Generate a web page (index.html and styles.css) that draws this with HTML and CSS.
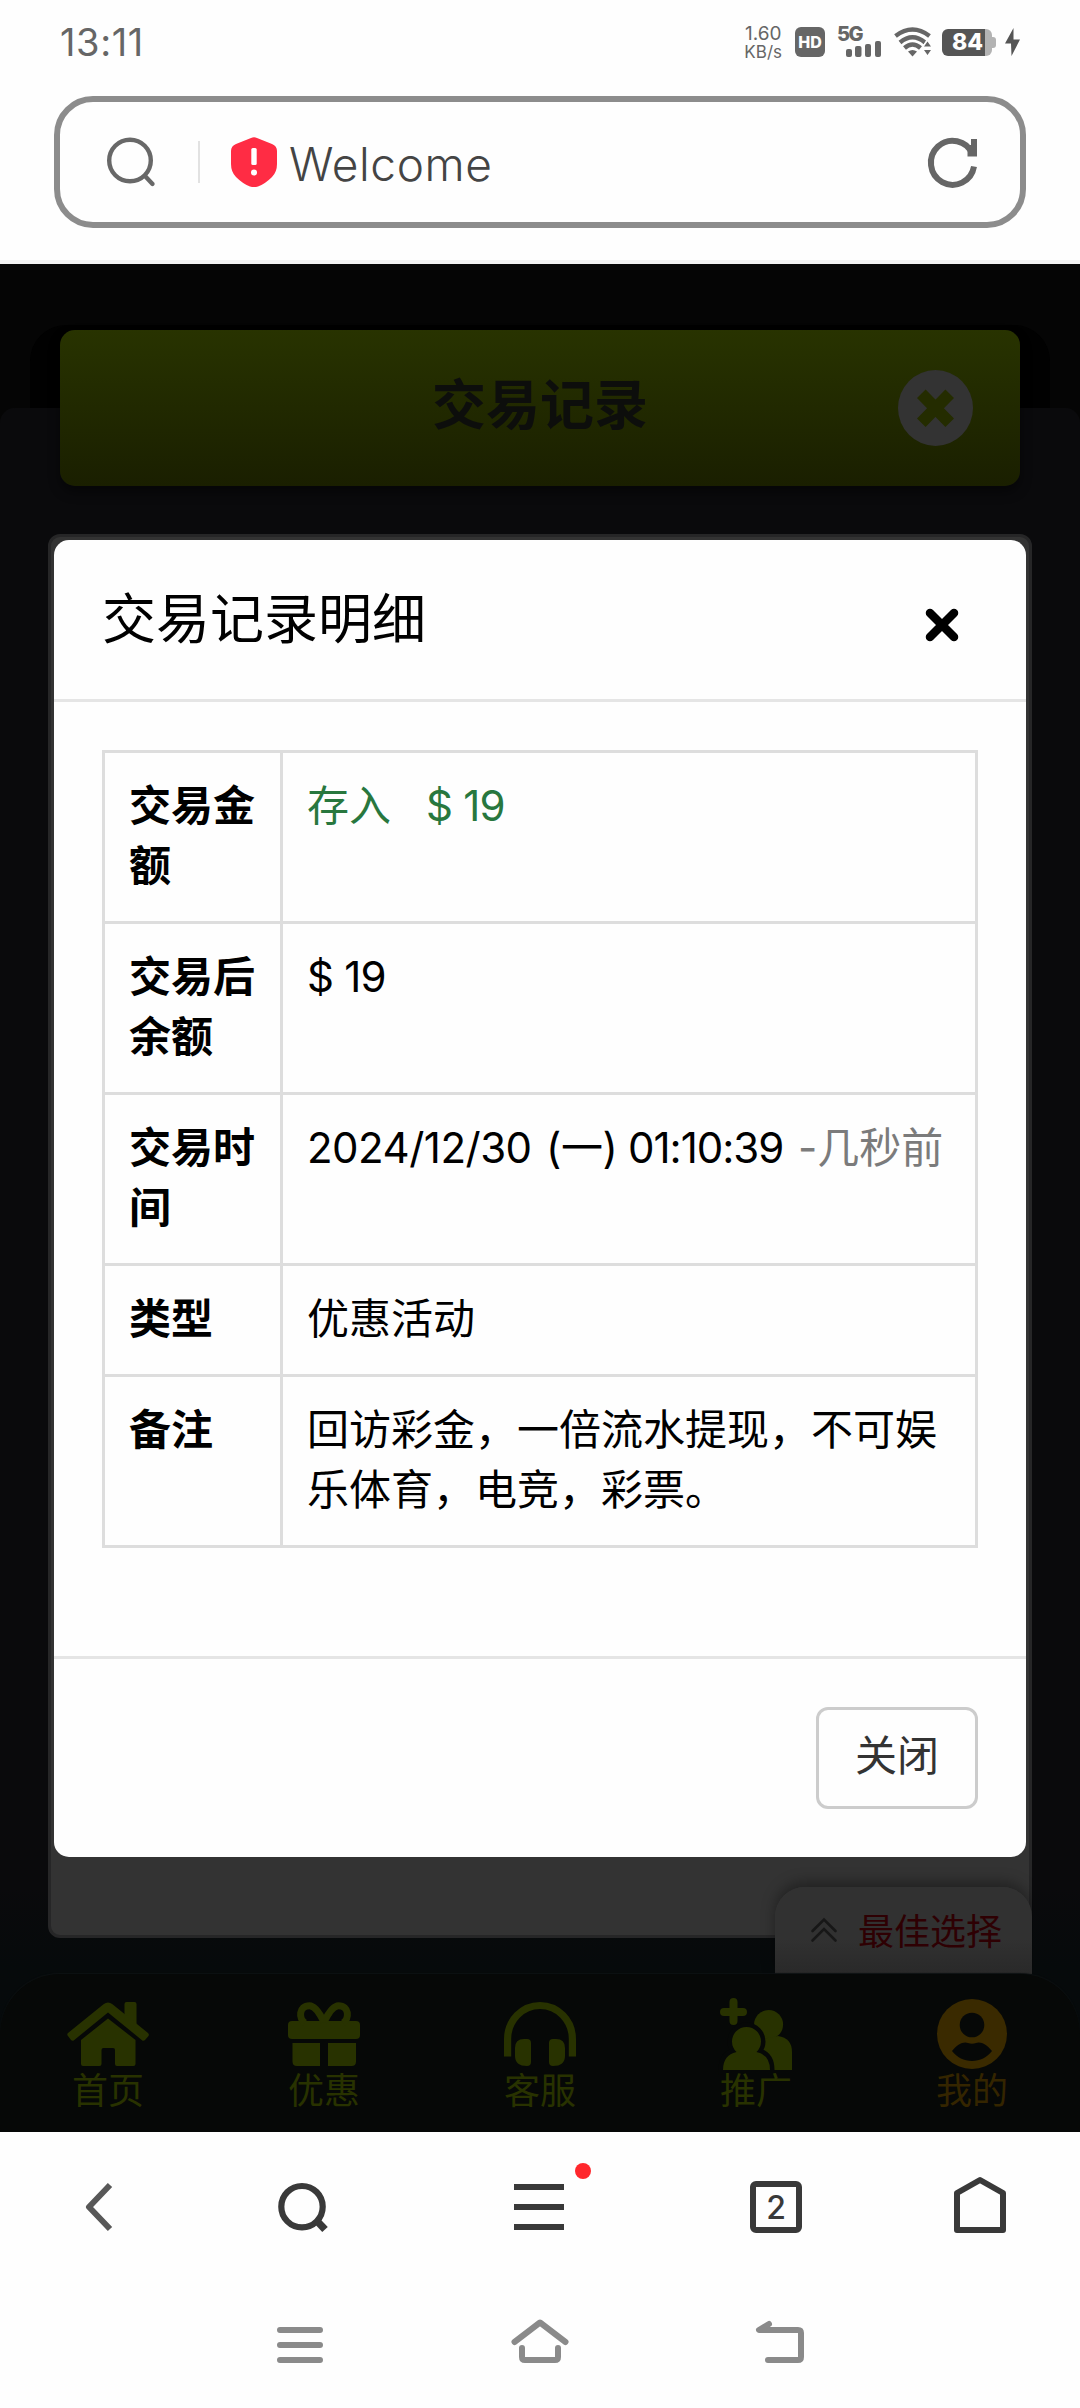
FILE: index.html
```html
<!DOCTYPE html>
<html lang="zh-CN">
<head>
<meta charset="utf-8">
<title>Welcome</title>
<link rel="stylesheet" href="styles.css">
</head>
<body>
<div class="status">
  <span class="clock">13:11</span>
  <div class="status-icons">
    <div class="speed"><span>1.60</span><span>KB/s</span></div>
    <span class="hd">HD</span>
    <div class="signal">
      <span class="net">5G</span>
      <svg width="35" height="16" viewBox="0 0 35 16" fill="#666"><rect x="0" y="8" width="6" height="8" rx="2"/><rect x="9" y="5" width="6.500" height="11" rx="2"/><rect x="19" y="3" width="6" height="13" rx="2"/><rect x="29" y="0" width="6" height="16" rx="2"/></svg>
    </div>
    <svg class="wifi" width="38" height="30" viewBox="0 0 38 30"><g fill="none" stroke="#666" stroke-width="4.400"><path d="M1.500 9Q18.500-4 35.500 9"/><path d="M6 15.500Q18.500 5 31 15.500"/><path d="M10.500 21Q18.500 14 26.500 21"/></g><path d="M14 24.500Q18.500 21.500 23 24.500L18.500 29.500Z" fill="#666"/><path d="M33.500 11l4.500 7.500v3l-4.500 8-4.500-8v-3z" fill="#fefefe"/><path d="M33.500 14.500l3.500 5h-7zM33.500 28l3.500-5h-7z" fill="#666"/></svg>
    <div class="battery"><span>84</span></div>
    <svg class="bolt" width="15" height="28" viewBox="0 0 15 28"><path d="M8.500 0L0 15.500h6L6.500 28 15 11.500H8.500z" fill="#555"/></svg>
  </div>
</div>

<div class="address">
  <svg class="find" width="48" height="50" viewBox="0 0 48 50" fill="none" stroke="#686868" stroke-width="4.400"><circle cx="23" cy="23.500" r="20.800"/><path d="M38 39l7.500 8" stroke-linecap="round"/></svg>
  <span class="divider"></span>
  <svg class="shield" width="46" height="50" viewBox="0 0 46 50"><path d="M20 1Q23-.5 26 1L41 7Q46 9 46 14V27Q46 35 41 40Q34 47 27 49.500Q23 50.500 19 49.500Q12 47 5 40Q0 35 0 27V14Q0 9 5 7Z" fill="#ff2c44"/><rect x="20.300" y="11" width="5.400" height="17" rx="1.500" fill="#fff"/><circle cx="23" cy="35.500" r="3" fill="#fff"/></svg>
  <span class="page-title">Welcome</span>
  <svg class="reload" width="50" height="50" viewBox="0 0 50 50" fill="none" stroke="#666" stroke-width="6"><path d="M44.500 17A21.700 22 0 1 0 46 29.500" /><path d="M46 2V19.500M42.500 8V19.500" /></svg>
</div>

<main class="page">
  <div class="hero"><div class="hero-shade"></div></div>
  <section class="sheet">
    <header class="bar">
      <h1>交易记录</h1>
      <svg class="bar-close" width="75" height="76" viewBox="0 0 75 76"><ellipse cx="37.500" cy="38" rx="37.500" ry="38" fill="#333"/><path d="M27.500 28L47.500 48.500M47.500 28L27.500 48.500" stroke="#242c00" stroke-width="12" stroke-linecap="square"/></svg>
    </header>
    <div class="list"></div>
  </section>

  <div class="best">
    <svg width="26" height="24" viewBox="0 0 26 24" fill="none" stroke="#171717" stroke-width="2.600" stroke-linecap="round"><path d="M1.500 13L13 1.500 24.500 13M1.500 22.500L13 11 24.500 22.500"/></svg>
    <span>最佳选择</span>
  </div>

  <nav class="tabs">
    <div class="tab">
      <svg width="82" height="72" viewBox="0 -4 82 72"><g fill="#283200"><path d="M57.500 20V2Q57.500 0 59.500 0H67.500Q69.500 0 69.500 2V28L57.500 20Z"/><path d="M1 34Q-.5 32.500 1 31L36.500 2.200Q41-1 45.500 2.200L81 31Q82.500 32.500 81.500 34L78 38Q76.500 39.500 75 38.200L41 10.500 7 38.200Q5.500 39.500 4 38Z"/><path d="M41 16.500L68.500 38V62Q68.500 64 66.500 64H50Q48 64 48 62V48Q48 46 46 46H36.500Q34.500 46 34.500 48V62Q34.500 64 32.500 64H16Q14 64 14 62V38Z"/></g></svg>
      <span>首页</span>
    </div>
    <div class="tab">
      <svg width="72" height="72" viewBox="0 -4 72 72"><g fill="#283200"><rect y="19" width="72" height="18" rx="4"/><path d="M4.500 41H32V64H9Q4.500 64 4.500 59.500ZM40 41H68V59.500Q68 64 63.500 64H40Z"/></g><path d="M36 20Q28 3.700 21.500 3.700C10.500 3.700 10.500 17 17 21M36 20Q44 3.700 50.500 3.700C61.500 3.700 61.500 17 55 21" fill="none" stroke="#283200" stroke-width="7"/></svg>
      <span>优惠</span>
    </div>
    <div class="tab">
      <svg width="72" height="72" viewBox="0 -4 72 72"><path d="M3.600 54.500V37A32.400 33.500 0 0 1 68.400 37V54.500" fill="none" stroke="#283200" stroke-width="7.200" stroke-linecap="butt"/><path d="M20 37H23Q27 37 27 41V60Q27 64 23 64Q11 64 11 54V46Q11 37 20 37ZM52 37H49Q45 37 45 41V60Q45 64 49 64Q61 64 61 54V46Q61 37 52 37Z" fill="#283200"/></svg>
      <span>客服</span>
    </div>
    <div class="tab">
      <svg width="72" height="72" viewBox="0 0 72 72"><path d="M13.500 4V23M4 14H23" stroke="#283200" stroke-width="8" stroke-linecap="round"/><g fill="#283200"><circle cx="48.600" cy="26.500" r="14.500"/><path d="M36 72V42L58 38Q72 40 72 54V72Z"/></g><g fill="#283200" stroke="#060807" stroke-width="9" paint-order="stroke"><path d="M16.500 54A14.500 14.500 0 1 1 36.500 54Q50 57 50 72H3Q3 57 16.500 54Z"/></g><path d="M3 72h47v5H3z" fill="#060807"/></svg>
      <span>推广</span>
    </div>
    <div class="tab active">
      <svg width="70" height="72" viewBox="0 0 70 72"><ellipse cx="35" cy="36" rx="35" ry="35" fill="#3a2a00"/><circle cx="35" cy="27" r="12.300" fill="#060807"/><path d="M15 53C20 46 27 43 31 45Q35 46.500 39 45C43 43 50 46 55 53C50 59.500 43 63 35 63S20 59.500 15 53Z" fill="#060807"/></svg>
      <span>我的</span>
    </div>
  </nav>

  <section class="modal">
    <header class="modal-head">
      <h2>交易记录明细</h2>
      <svg width="34" height="34" viewBox="0 0 34 34" stroke="#000" stroke-width="8.500" stroke-linecap="round"><path d="M5 5L29 29M29 5L5 29"/></svg>
    </header>
    <div class="modal-body">
      <table>
        <tr><th>交易金额</th><td class="in">存入<span class="amt gap">$ 19</span></td></tr>
        <tr><th>交易后余额</th><td><span class="amt">$ 19</span></td></tr>
        <tr><th>交易时间</th><td><div class="when"><span class="date">2024/12/30</span><span class="day">(一)</span><span class="time">01:10:39</span><span class="ago">-几秒前</span></div></td></tr>
        <tr><th>类型</th><td>优惠活动</td></tr>
        <tr><th>备注</th><td>回访彩金，一倍流水提现，不可娱乐体育，电竞，彩票。</td></tr>
      </table>
    </div>
    <footer class="modal-foot"><button class="close">关闭</button></footer>
  </section>
</main>

<div class="toolbar">
  <svg width="28" height="48" viewBox="0 0 28 48" fill="none" stroke="#585858" stroke-width="6" stroke-linejoin="round"><path d="M25 2L4 24 25 46"/></svg>
  <svg class="search" width="50" height="50" viewBox="0 0 50 50" fill="none" stroke="#393939" stroke-width="6.200"><circle cx="24" cy="23.700" r="20.700"/><path d="M39 38l8 8.500" stroke-width="7.500"/></svg>
  <div class="menu">
    <svg width="50" height="46" viewBox="0 0 50 46" fill="#393939"><rect width="50" height="6"/><rect y="20" width="50" height="6"/><rect y="40" width="50" height="6"/></svg>
    <span class="dot"></span>
  </div>
  <span class="count">2</span>
  <svg class="house" width="52" height="56" viewBox="0 0 52 56" fill="none" stroke="#393939" stroke-width="6" stroke-linejoin="round"><path d="M3 16L26 3 49 16V53H3Z"/></svg>
</div>

<div class="sysnav">
  <svg width="46" height="44" viewBox="0 0 46 44" stroke="#8a8a8a" stroke-width="6" stroke-linecap="round"><path d="M3 11H43M3 26H43M3 41H43"/></svg>
  <svg width="58" height="44" viewBox="0 0 58 44" fill="none" stroke="#8a8a8a" stroke-width="6" stroke-linecap="round" stroke-linejoin="round"><path d="M3.500 23L29 3.500 54.500 23M11 29V38Q11 41 14 41H44Q47 41 47 38V29"/></svg>
  <svg width="48" height="44" viewBox="0 0 48 44" fill="none" stroke="#8a8a8a" stroke-width="6" stroke-linecap="round" stroke-linejoin="round"><path d="M13 5L3 11H42Q45 11 45 14V38Q45 41 42 41H12"/></svg>
</div>
</body>
</html>
```
FILE: styles.css
```css
* { box-sizing: border-box; }
body {
  margin: 0;
  width: 1080px;
  height: 2408px;
  overflow: hidden;
  display: flex;
  flex-direction: column;
  background: #fefefe;
  font-family: Inter, "Noto Sans CJK SC", sans-serif;
  color: #000;
}
svg { display: block; flex: none; overflow: visible; }
h1, h2 { margin: 0; }

.status {
  height: 96px;
  padding: 0 60px 12px;
  display: flex;
  justify-content: space-between;
  align-items: center;
  color: #666;
}
.clock { font-size: 38px; letter-spacing: 0.6px; }
.status-icons { display: flex; align-items: center; }
.speed {
  display: flex;
  flex-direction: column;
  align-items: center;
  font: 19px/20px Inter, sans-serif;
  margin-right: 13px;
}
.speed span + span { font-size: 17px; line-height: 16px; }
.hd {
  width: 30px;
  height: 30px;
  border-radius: 6px;
  background: #666;
  color: #fefefe;
  font: 800 16px/30px Inter, sans-serif;
  text-align: center;
  margin-right: 12px;
}
.signal { width: 45px; height: 30px; margin-right: 12px; }
.net { display: block; height: 14px; font: 800 20px/15px Inter, sans-serif; letter-spacing: -1.5px; }
.signal svg { margin-left: 9px; }
.wifi { margin-right: 10px; }
.battery {
  width: 50px;
  height: 27px;
  border-radius: 6px;
  margin-right: 13px;
  background: linear-gradient(90deg, #555 43px, #b3b3b3 43px);
  color: #fefefe;
  display: flex;
  align-items: center;
  position: relative;
  font: 800 23px/27px Inter, sans-serif;
  padding-left: 10px;
}
.battery::after {
  content: "";
  position: absolute;
  left: 50px;
  top: 8px;
  width: 4px;
  height: 11px;
  border-radius: 0 3px 3px 0;
  background: #b3b3b3;
}

.address {
  margin: 0 54px;
  height: 132px;
  border: 6px solid #8c8c8c;
  border-radius: 39px;
  display: flex;
  align-items: center;
  padding: 0 42px 0 47px;
}
.divider { width: 2px; height: 42px; background: #e2e2e2; margin: 0 31px 0 43px; }
.page-title { flex: 1; margin: 4px 0 0 12px; font-size: 46px; font-weight: 350; letter-spacing: 0.6px; color: #444; }

.page {
  margin-top: 32px;
  border-top: 4px solid #f2f2f2;
  height: 1872px;
  flex: none;
  position: relative;
  background: #050505;
  display: flex;
  flex-direction: column;
}
.hero { height: 144px; padding: 61px 30px 0; flex: none; }
.hero-shade { height: 83px; background: #010101; border-radius: 36px 36px 0 0; }
.sheet {
  flex: 1;
  background: linear-gradient(#0a0a0c 1480px, #060a0b 1560px);
  border-radius: 15px 15px 0 0;
  padding: 0 48px;
  margin-bottom: -60px;
}
.bar {
  height: 156px;
  margin: -78px 12px 48px;
  border-radius: 15px;
  background: linear-gradient(#283300, #1a1f00);
  box-shadow: 0 6px 12px rgba(0, 0, 0, 0.45);
  display: grid;
  grid-template-columns: 1fr 216px 1fr;
  align-items: center;
}
.bar h1 {
  grid-column: 2;
  font-size: 54px;
  line-height: 60px;
  margin-top: -5px;
  color: #0d0e0c;
  white-space: nowrap;
}
.bar-close { justify-self: end; margin-right: 47px; }
.list {
  height: 1404px;
  border: 3px solid #262627;
  border-radius: 12px;
  background: #333;
}

.best {
  position: absolute;
  right: 48px;
  bottom: 158px;
  width: 257px;
  height: 87px;
  border-radius: 30px 30px 0 0;
  background: linear-gradient(#313131 60%, #292929);
  box-shadow: 0 -5px 14px rgba(0, 0, 0, 0.35);
  clip-path: inset(-30px -1px 0 -20px);
  display: flex;
  align-items: center;
  gap: 21px;
  padding: 0 0 0 36px;
  font-size: 36px;
  color: #2e0003;
}
.best svg { margin-top: -2px; }
.best span { line-height: 50px; margin-top: 2px; }

.tabs {
  height: 158px;
  flex: none;
  position: relative;
  border-radius: 60px 60px 0 0;
  background: #060807;
  box-shadow: 0 -1px 1px #0d1112;
  display: grid;
  grid-template-columns: repeat(5, 1fr);
}
.tab {
  display: flex;
  flex-direction: column;
  align-items: center;
  padding-top: 24px;
  color: #283200;
  font-size: 36px;
  line-height: 42px;
}
.active { color: #342500; }

.modal {
  position: absolute;
  left: 54px;
  top: 276px;
  width: 972px;
  height: 1317px;
  border-radius: 15px;
  background: #fefefe;
  display: flex;
  flex-direction: column;
}
.modal-head {
  height: 162px;
  border-bottom: 3px solid #e5e5e5;
  display: flex;
  justify-content: space-between;
  align-items: center;
  padding: 0 67px 0 48px;
}
.modal-head h2 { font-size: 54px; font-weight: 400; line-height: 60px; margin-top: 0; }
.modal-head svg { margin-top: 11px; }
.modal-body { height: 954px; padding: 48px 48px 0; }
table {
  width: 876px;
  table-layout: fixed;
  border-collapse: collapse;
  font-size: 42px;
  line-height: 60px;
}
th, td { border: 3px solid #ddd; padding: 23px 24px 25px; text-align: left; vertical-align: top; }
th { width: 178px; padding-right: 22px; font-weight: 700; }
.in { color: #28773e; }
.amt { letter-spacing: -0.8px; }
.gap { margin-left: 35px; }
.when { display: flex; align-items: center; height: 60px; white-space: nowrap; }
.date { width: 239px; }
.day { width: 82px; letter-spacing: -0.4px; }
.time { width: 170px; }
.date { letter-spacing: -0.5px; }
.time { letter-spacing: -1px; }
.ago { color: #7b7b7b; }
.modal-foot {
  border-top: 3px solid #e5e5e5;
  padding: 48px;
  display: flex;
  justify-content: flex-end;
}
.close {
  width: 162px;
  height: 102px;
  border: 3px solid #ccc;
  border-radius: 12px;
  background: #fefefe;
  padding: 0 0 4px;
  font: 42px/60px Inter, "Noto Sans CJK SC", sans-serif;
  color: #333;
}

.toolbar {
  height: 156px;
  flex: none;
  padding-bottom: 6px;
  display: grid;
  grid-template-columns: 198px 210px 262px 212px 196px;
  align-items: center;
  justify-items: center;
}
.search { margin-top: 1px; }
.house { margin-top: -4px; }
.menu { position: relative; }
.dot {
  position: absolute;
  left: 61px;
  top: -21px;
  width: 16px;
  height: 16px;
  border-radius: 50%;
  background: #ff272c;
}
.count {
  width: 52px;
  height: 52px;
  border: 6px solid #393939;
  border-radius: 6px;
  color: #393939;
  font: 500 32px/41px Inter, sans-serif;
  text-align: center;
}
.sysnav {
  padding: 31px 180px 0;
  display: grid;
  grid-template-columns: repeat(3, 1fr);
  justify-items: center;
}
```
